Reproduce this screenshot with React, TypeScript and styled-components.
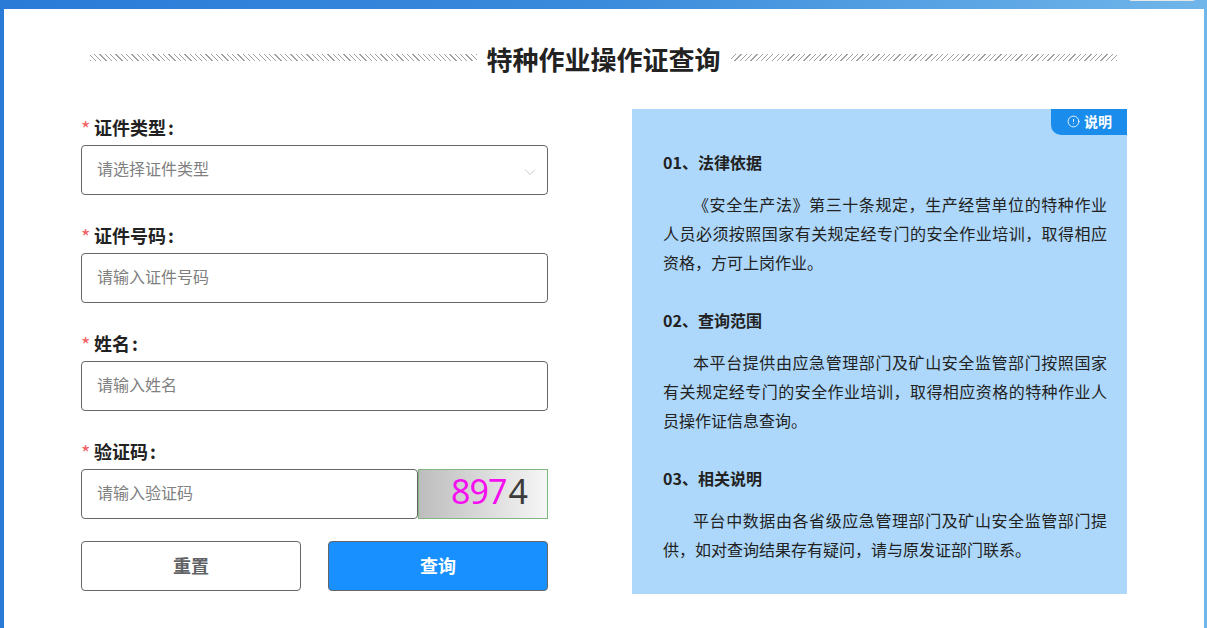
import React from "react";
import styled, { createGlobalStyle } from "styled-components";
import { CircleAlert } from "lucide-react";

const Global = createGlobalStyle`
  html, body { margin: 0; padding: 0; }
  body { font-family: "Noto Sans CJK SC", "Liberation Sans", sans-serif; color: #222; }
  * { box-sizing: border-box; }
`;

const Page = styled.div`
  position: relative;
  height: 628px;
  overflow: hidden;
  padding: 9px 3px 0 4px;
  background: linear-gradient(90deg, #2a7bd8 0%, #3a8bdc 50%, #70b6ea 100%);
`;

const HeaderPill = styled.div`
  position: absolute;
  top: -20px;
  right: 11px;
  width: 68px;
  height: 21px;
  border-radius: 4px;
  background: #e8e8e8;
`;

const Card = styled.main`
  height: 619px;
  background: #fff;
  padding: 34px 77px 0;
`;

const TitleRow = styled.div`
  display: flex;
  align-items: center;
  gap: 10px;
  height: 32px;
  margin: 0 10px 34px 9px;
`;

const Hatch = styled.div<{ $dir: "left" | "right" }>`
  flex: 1;
  height: 7px;
  margin-top: -3px;
  background: repeating-linear-gradient(
    ${(p) => (p.$dir === "left" ? "45deg" : "-45deg")},
    #a0a0a0 0,
    #a0a0a0 0.9px,
    #fff 0.9px,
    #fff 3.75px
  );
`;

const Title = styled.h1`
  margin: 0;
  font-size: 26px;
  line-height: 32px;
  font-weight: 700;
  color: #222;
  white-space: nowrap;
`;

const Columns = styled.div`
  display: flex;
  justify-content: space-between;
  align-items: flex-start;
`;

const Form = styled.form`
  width: 467px;
  display: flex;
  flex-direction: column;
  gap: 22px;
`;

const Field = styled.div`
  display: flex;
  flex-direction: column;
`;

const Label = styled.label`
  display: flex;
  align-items: center;
  height: 36px;
  font-size: 18px;
  font-weight: 700;
  color: #222;
`;

const Star = styled.span`
  width: 13px;
  margin: 3px 0 0 0;
  color: #f5605f;
  font-weight: 400;
  font-size: 20px;
  line-height: 1;
`;

const Colon = styled.span`
  margin-left: 2px;
`;

const InputBox = styled.input`
  width: 100%;
  height: 50px;
  padding: 0 15px 4px;
  border: 1px solid #666;
  border-radius: 4px;
  background: #fff;
  font: inherit;
  font-size: 16px;
  color: #333;
  outline: none;
  &::placeholder { color: #808080; opacity: 1; }
`;

const SelectBox = styled.div`
  display: flex;
  align-items: center;
  justify-content: space-between;
  height: 50px;
  padding: 0 11px 4px 15px;
  border: 1px solid #666;
  border-radius: 4px;
  font-size: 16px;
  color: #808080;
`;

const Chevron = styled.svg`
  width: 12px;
  height: 8px;
  margin-top: 7px;
  color: #c9ccd2;
`;

const CaptchaRow = styled.div`
  display: flex;
`;

const CaptchaInput = styled(InputBox)`
  width: 337px;
  flex: none;
`;

const Captcha = styled.div`
  flex: 1;
  height: 50px;
  display: flex;
  align-items: center;
  padding: 0 0 6px 32px;
  border: 1px solid #7fb77e;
  background: linear-gradient(90deg, #bdbdbd 0%, #f6f6f6 100%);
  font-family: "Noto Sans", "Liberation Sans", sans-serif;
  font-size: 34px;
  line-height: 42px;
`;

const Digit = styled.span<{ $color: string; $gap?: number }>`
  color: ${(p) => p.$color};
  width: 18.5px;
  margin-left: ${(p) => p.$gap ?? 0}px;
`;

const Buttons = styled.div`
  display: flex;
  justify-content: space-between;
`;

const Button = styled.button<{ $primary?: boolean }>`
  width: 220px;
  height: 50px;
  padding: 0 0 2px;
  border: 1px solid #666;
  border-radius: 4px;
  font: inherit;
  font-size: 18px;
  font-weight: 700;
  color: ${(p) => (p.$primary ? "#fff" : "#606266")};
  background: ${(p) => (p.$primary ? "#1890ff" : "#fff")};
`;

const Panel = styled.aside`
  position: relative;
  width: 495px;
  height: 485px;
  padding: 39px 20px 0 31px;
  background: #add8fb;
`;

const Badge = styled.div`
  position: absolute;
  top: 0;
  right: 0;
  width: 76px;
  height: 26px;
  padding: 0 0 2px 16px;
  display: flex;
  align-items: center;
  gap: 4px;
  background: #1a8ceb;
  border-bottom-left-radius: 10px;
  color: #fff;
  font-size: 14px;
  font-weight: 700;
`;

const NoteHeading = styled.h2`
  margin: 0 0 13px;
  font-size: 16px;
  line-height: 29px;
  font-weight: 700;
  color: #222;
`;

const NoteText = styled.p`
  margin: 0 0 29px;
  font-size: 16px;
  line-height: 29px;
  text-indent: 30px;
  text-align: justify;
  color: #222;
`;

const notes = [
  {
    heading: "01、法律依据",
    text: "《安全生产法》第三十条规定，生产经营单位的特种作业人员必须按照国家有关规定经专门的安全作业培训，取得相应资格，方可上岗作业。",
  },
  {
    heading: "02、查询范围",
    text: "本平台提供由应急管理部门及矿山安全监管部门按照国家有关规定经专门的安全作业培训，取得相应资格的特种作业人员操作证信息查询。",
  },
  {
    heading: "03、相关说明",
    text: "平台中数据由各省级应急管理部门及矿山安全监管部门提供，如对查询结果存有疑问，请与原发证部门联系。",
  },
];

const FieldLabel = ({ children }: { children: string }) => (
  <Label>
    <Star>*</Star>
    {children}
    <Colon>:</Colon>
  </Label>
);

export default function App() {
  return (
    <Page>
      <Global />
      <HeaderPill />
      <Card>
        <TitleRow>
          <Hatch $dir="left" />
          <Title>特种作业操作证查询</Title>
          <Hatch $dir="right" />
        </TitleRow>
        <Columns>
          <Form onSubmit={(e) => e.preventDefault()}>
            <Field>
              <FieldLabel>证件类型</FieldLabel>
              <SelectBox>
                请选择证件类型
                <Chevron viewBox="0 0 12 8" fill="none" stroke="currentColor" strokeWidth="1">
                  <path d="M1 1.5 L6 6.5 L11 1.5" />
                </Chevron>
              </SelectBox>
            </Field>
            <Field>
              <FieldLabel>证件号码</FieldLabel>
              <InputBox placeholder="请输入证件号码" />
            </Field>
            <Field>
              <FieldLabel>姓名</FieldLabel>
              <InputBox placeholder="请输入姓名" />
            </Field>
            <Field>
              <FieldLabel>验证码</FieldLabel>
              <CaptchaRow>
                <CaptchaInput placeholder="请输入验证码" />
                <Captcha>
                  <Digit $color="#f50ff0">8</Digit>
                  <Digit $color="#f50ff0">9</Digit>
                  <Digit $color="#f50ff0">7</Digit>
                  <Digit $color="#3c3c3c" $gap={2}>4</Digit>
                </Captcha>
              </CaptchaRow>
            </Field>
            <Buttons>
              <Button type="button">重置</Button>
              <Button type="submit" $primary>查询</Button>
            </Buttons>
          </Form>
          <Panel>
            <Badge>
              <CircleAlert size={13} strokeWidth={1.6} />
              说明
            </Badge>
            {notes.map((n) => (
              <section key={n.heading}>
                <NoteHeading>{n.heading}</NoteHeading>
                <NoteText>{n.text}</NoteText>
              </section>
            ))}
          </Panel>
        </Columns>
      </Card>
    </Page>
  );
}
